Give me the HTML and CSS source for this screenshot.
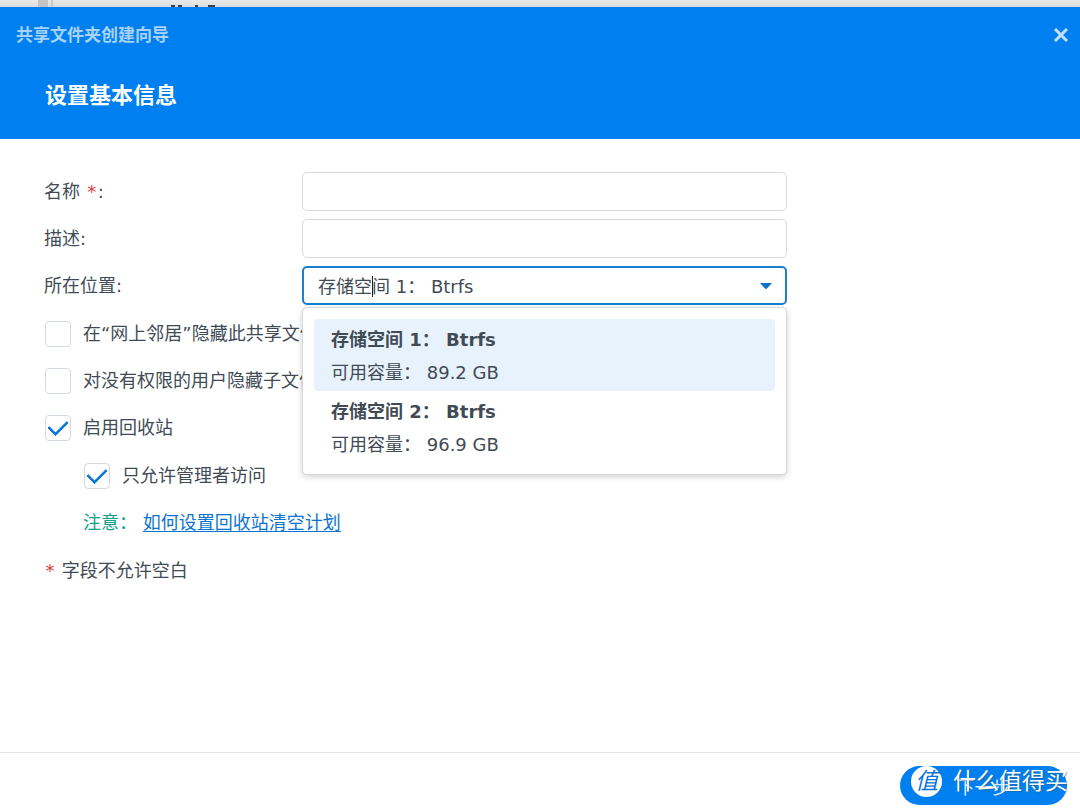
FILE: index.html
```html
<!DOCTYPE html>
<html lang="zh-CN">
<head>
  <meta charset="UTF-8" />
  <meta name="viewport" content="width=device-width, initial-scale=1.0" />
  <title>共享文件夹创建向导</title>
  <link rel="stylesheet" href="styles.css">
</head>
<body>
  <!-- Edge of the window behind the wizard -->
  <div class="backdrop">
    <svg width="220" height="7" viewBox="0 0 220 7" aria-hidden="true">
      <rect x="38" y="0" width="10" height="7" fill="#c3c3c3" />
      <rect x="51" y="0" width="2" height="7" fill="#c8c8c8" />
      <path d="M171 6h4M178 6h4M195 6h3M208 6h7" fill="none" stroke="#3a4046" stroke-width="2" />
    </svg>
  </div>

  <main class="wizard">
    <header class="wizard-header">
      <div class="title-bar">
        <span class="window-title">共享文件夹创建向导</span>
        <button type="button" class="close-btn" aria-label="关闭">
          <svg width="16" height="16" viewBox="0 0 16 16"><path d="M2 2l12 12M14 2L2 14" /></svg>
        </button>
      </div>
      <h1>设置基本信息</h1>
    </header>

    <form class="wizard-form" id="share-form">
      <div class="group">
        <div class="field">
          <label for="shareName">名称 <span class="required">*</span>:</label>
          <input type="text" id="shareName" required />
        </div>
        <div class="field">
          <label for="shareDesc">描述:</label>
          <input type="text" id="shareDesc" />
        </div>
        <div class="field">
          <label for="location">所在位置:</label>
          <div class="combo">
            <select id="location">
              <option>存储空间 1： Btrfs</option>
              <option>存储空间 2： Btrfs</option>
            </select>
            <svg class="arrow" width="12" height="6" viewBox="0 0 12 6" aria-hidden="true"><path d="M0 0h12L7 5.500Q6 6.300 5 5.500z" /></svg>
            <span class="caret"></span>
            <ul class="menu">
              <li class="selected"><strong>存储空间 1： Btrfs</strong><span>可用容量： 89.2 GB</span></li>
              <li><strong>存储空间 2： Btrfs</strong><span>可用容量： 96.9 GB</span></li>
            </ul>
          </div>
        </div>
      </div>

      <div class="group">
        <label class="check"><input type="checkbox" /> 在“网上邻居”隐藏此共享文件夹</label>
        <label class="check"><input type="checkbox" /> 对没有权限的用户隐藏子文件夹</label>
        <label class="check"><input type="checkbox" checked /> 启用回收站</label>
      </div>

      <div class="group nested">
        <label class="check"><input type="checkbox" checked /> 只允许管理者访问</label>
        <p class="note"><span>注意：</span> <a href="#">如何设置回收站清空计划</a></p>
      </div>

      <p class="hint"><span class="required">*</span> 字段不允许空白</p>
    </form>

    <footer class="wizard-footer">
      <button type="submit" form="share-form" class="next-btn">下一步</button>
      <div class="watermark"><span class="badge">值</span>什么值得买</div>
    </footer>
  </main>
</body>
</html>
```

FILE: styles.css
```css
/* Base */
* { box-sizing: border-box; }
body {
  margin: 0;
  min-height: 100vh;
  display: flex;
  flex-direction: column;
  overflow: hidden;
  font-family: "DejaVu Sans", "Noto Sans CJK SC", sans-serif;
  font-size: 18px;
  color: #414b55;
  background: #fff;
}
p, h1, ul { margin: 0; padding: 0; }
input, select, button {
  font: inherit;
  color: inherit;
}
.backdrop {
  height: 7px;
  background: linear-gradient(#ebe9e8, #d8dcdf);
}
.backdrop svg { display: block; }

/* Header */
.wizard {
  flex: 1;
  display: flex;
  flex-direction: column;
}
.wizard-header {
  height: 132px;
  background: #0080f0;
  color: #fff;
}
.title-bar {
  display: flex;
  align-items: center;
  justify-content: space-between;
  height: 56px;
  padding: 0 11px 0 16px;
}
.window-title {
  font-size: 17px;
  line-height: 20px;
  font-weight: bold;
  color: #a6d2fb;
}
.close-btn {
  display: flex;
  padding: 0;
  border: none;
  background: none;
  cursor: pointer;
}
.close-btn path {
  fill: none;
  stroke: #c0e0ff;
  stroke-width: 3;
}
h1 {
  padding: 0 45px;
  font-size: 22px;
  line-height: 66px;
  font-weight: bold;
}

/* Form */
.wizard-form {
  flex: 1;
  display: flex;
  flex-direction: column;
  gap: 9px;
  padding: 33px 45px 33px 44px;
}
.group {
  display: flex;
  flex-direction: column;
  gap: 8px;
}
.nested { padding-left: 39px; }
.field {
  display: grid;
  grid-template-columns: 258px minmax(0, 485px);
  align-items: center;
  height: 39px;
}
.field label { line-height: 39px; }
.field input,
.field select {
  width: 100%;
  height: 39px;
  padding: 0 15px;
  border: 1px solid #d6dbe0;
  border-radius: 5px;
  background: #fff;
  outline: none;
}
.combo { position: relative; }
.combo select {
  display: block;
  appearance: none;
  padding: 2px 14px 0;
  border: 2px solid #1c7fce;
}
.arrow {
  position: absolute;
  right: 15px;
  top: 17px;
  fill: #0c74cb;
}
.caret {
  position: absolute;
  left: 70px;
  top: 10px;
  width: 1px;
  height: 21px;
  background: #222;
}
.menu {
  position: absolute;
  top: 41px;
  left: 0;
  right: 0;
  z-index: 1;
  padding: 11px;
  list-style: none;
  background: #fff;
  border: 1px solid #d5d9dd;
  border-radius: 5px;
  box-shadow: 0 2px 6px rgba(0,0,0,0.18);
}
.menu li {
  padding: 4px 17px 2px;
  border-radius: 4px;
  line-height: 33px;
}
.menu li.selected { background: #e8f2fc; }
.menu strong,
.menu span { display: block; }
.required {
  display: inline-block;
  width: 12px;
  text-align: center;
  color: #dc3b3b;
}

.check,
.note,
.hint {
  height: 39px;
  line-height: 39px;
  white-space: nowrap;
}
.check {
  display: flex;
  align-items: center;
  gap: 12px;
}
.check input {
  appearance: none;
  display: grid;
  place-items: center;
  width: 26px;
  height: 26px;
  margin: 0 0 0 1px;
  border: 1px solid #d3dae3;
  border-radius: 4px;
  background: #fff;
}
.check input:checked::before {
  content: "";
  width: 9px;
  height: 16px;
  border: solid #0c78d8;
  border-width: 0 3px 3px 0;
  border-radius: 1px;
  transform: translateY(-2px) rotate(45deg);
}
.note span { color: #10a088; }
.note a {
  color: #0c74d0;
  text-underline-offset: 2px;
}

/* Footer */
.wizard-footer {
  position: relative;
  display: flex;
  justify-content: flex-end;
  padding: 13px 13px 3px;
  border-top: 1px solid #e3e6e9;
}
.next-btn {
  width: 167px;
  height: 39px;
  border: none;
  border-radius: 20px;
  background: #0080f0;
  color: #d5f0ff;
  cursor: pointer;
}
.watermark {
  position: absolute;
  right: 12px;
  top: 12px;
  display: flex;
  align-items: center;
  gap: 11px;
  font-size: 23px;
  line-height: 32px;
  color: #fff;
  text-shadow: 1px 1px 1px rgba(60,80,100,0.5);
  pointer-events: none;
}
.badge {
  width: 31px;
  height: 31px;
  border-radius: 50%;
  background: #fff;
  color: #0872d8;
  font-style: italic;
  line-height: 30px;
  text-align: center;
  text-shadow: none;
}
```
